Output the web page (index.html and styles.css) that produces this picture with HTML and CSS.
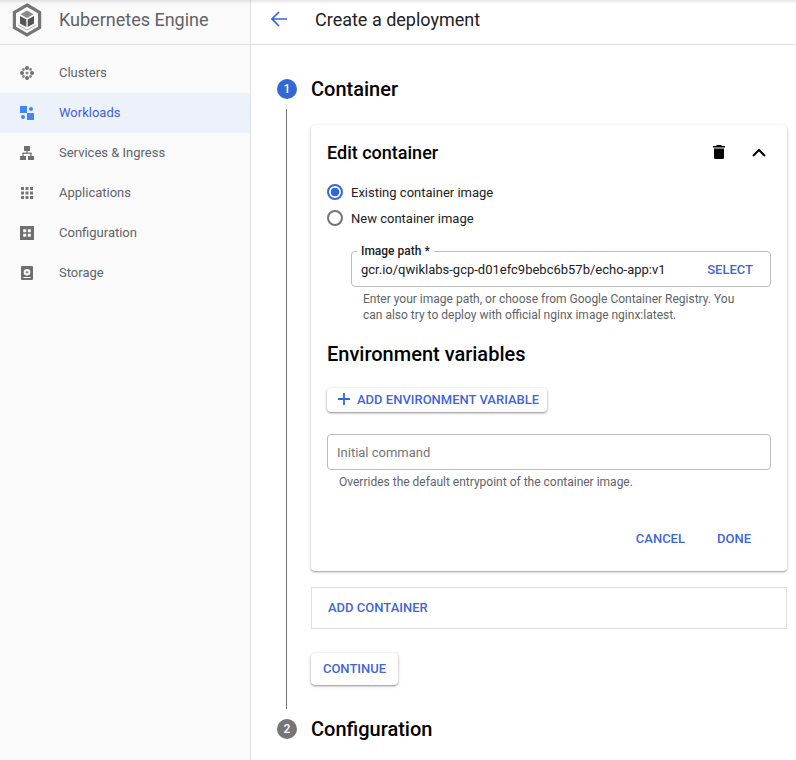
FILE: index.html
```html
<!DOCTYPE html>
<html lang="en">
<head>
	<meta charset="UTF-8">
	<title>Create a deployment</title>
	<link rel="stylesheet" href="styles.css">
</head>
<body>
	<div id="app">
		<div id="sidebar">
			<div class="side-head">
				<svg class="logo" width="30" height="34" viewBox="0 0 30 34">
					<path d="M15 2 27.600 9.300v15.400L15 32 2.400 24.700V9.300z" fill="none" stroke="#757575" stroke-width="3.200"/>
					<path d="M15 7.500 21.500 11.300 15 15 8.500 11.300z" fill="#8a8a8a"/>
					<path d="M8 13 14.300 16.600v7.400L8 20.400z" fill="#555"/>
					<path d="M22 13 15.700 16.600v7.400L22 20.400z" fill="#555"/>
					<path d="M6 22 15 27l9-5" fill="none" stroke="#b0b0b0" stroke-width="1"/>
				</svg>
				<span class="product">Kubernetes Engine</span>
			</div>
			<ul class="nav">
				<li>
					<svg class="ico" width="14" height="14" viewBox="0 0 14 14" fill="#6f6f6f">
						<circle cx="7" cy="2" r="2"/><circle cx="7" cy="12" r="2"/><circle cx="2" cy="7" r="2"/><circle cx="12" cy="7" r="2"/>
						<g fill="#858585"><circle cx="3.500" cy="3.500" r="1.400"/><circle cx="10.500" cy="3.500" r="1.400"/><circle cx="3.500" cy="10.500" r="1.400"/><circle cx="10.500" cy="10.500" r="1.400"/><circle cx="7" cy="7" r="1.500"/></g>
					</svg>
					Clusters
				</li>
				<li class="on">
					<svg class="ico" width="14" height="14" viewBox="0 0 14 14" fill="#4285f4">
						<rect x="0" y="0" width="7" height="7"/><rect x="7" y="7" width="7" height="7"/><circle cx="11" cy="3" r="2"/><circle cx="3" cy="11" r="2"/>
					</svg>
					Workloads
				</li>
				<li>
					<svg class="ico" width="14" height="14" viewBox="0 0 14 14" fill="#6f6f6f">
						<rect x="4" y="0" width="6" height="5"/><rect x="6.400" y="5" width="1.200" height="2"/><rect x="2.400" y="6.600" width="9.200" height="1.200"/><rect x="2.400" y="7" width="1.200" height="3"/><rect x="10.400" y="7" width="1.200" height="3"/><rect x="0" y="10" width="6" height="4"/><rect x="8" y="10" width="6" height="4"/>
					</svg>
					Services &amp; Ingress
				</li>
				<li>
					<svg class="ico" width="14" height="14" viewBox="0 0 14 14" fill="#757575">
						<path d="M1 1h3v3H1zM5.500 1h3v3h-3zM10 1h3v3h-3zM1 5.500h3v3H1zM5.500 5.500h3v3h-3zM10 5.500h3v3h-3zM1 10h3v3H1zM5.500 10h3v3h-3zM10 10h3v3h-3z"/>
					</svg>
					Applications
				</li>
				<li>
					<svg class="ico" width="14" height="14" viewBox="0 0 14 14">
						<rect width="14" height="14" fill="#6f6f6f"/>
						<path d="M3.200 3.200h3v3h-3zM7.800 3.200h3v3h-3zM3.200 7.800h3v3h-3zM7.800 7.800h3v3h-3z" fill="#fafafa"/>
					</svg>
					Configuration
				</li>
				<li>
					<svg class="ico" width="14" height="14" viewBox="0 0 14 14">
						<rect x="1" y="0" width="12" height="14" rx="1" fill="#6f6f6f"/>
						<circle cx="7" cy="6.300" r="3.300" fill="#fafafa"/>
						<circle cx="7" cy="6.300" r="1.200" fill="#8a8a8a"/>
						<rect x="3.500" y="11" width="7" height="1" fill="#fafafa"/>
					</svg>
					Storage
				</li>
			</ul>
		</div>
		<div id="main">
			<div class="top-bar">
				<svg class="back" width="16" height="16" viewBox="0 0 16 16">
					<path d="M16 8H1.500M8 1 1 8l7 7" fill="none" stroke="#3367d6" stroke-width="1.700"/>
				</svg>
				<span class="page-title">Create a deployment</span>
			</div>
			<div class="stepper">
				<div class="step-head">
					<span class="step-num active">1</span>
					<span class="step-title">Container</span>
				</div>
				<div class="step-body">
					<div class="card">
						<div class="card-head">
							<h2>Edit container</h2>
							<svg class="trash" width="12" height="14" viewBox="0 0 12 14" fill="#000">
								<path d="M4 0h4l1 1h3v1.500H0V1h3zM1 3.500h10V12.500A1.500 1.500 0 0 1 9.500 14h-7A1.500 1.500 0 0 1 1 12.500z"/>
							</svg>
							<svg class="chevron" width="14" height="9" viewBox="0 0 14 9">
								<path d="M1 8l6-6 6 6" fill="none" stroke="#000" stroke-width="2"/>
							</svg>
						</div>
						<div class="radios">
							<label class="radio"><span class="dot checked"></span>Existing container image</label>
							<label class="radio"><span class="dot"></span>New container image</label>
						</div>
						<div class="image-block">
							<div class="field path-field">
								<span class="legend">Image path *</span>
								<span class="value">gcr.io/qwiklabs-gcp-d01efc9bebc6b57b/echo-app:v1</span>
								<span class="link">SELECT</span>
							</div>
							<p class="help path-help">Enter your image path, or choose from Google Container Registry. You can also try to deploy with official nginx image nginx:latest.</p>
						</div>
						<h2 class="env-title">Environment variables</h2>
						<div class="raised add-env">
							<svg width="12" height="12" viewBox="0 0 12 12">
								<path d="M6 0v12M0 6h12" stroke="#3367d6" stroke-width="1.800"/>
							</svg>
							<span class="link">ADD ENVIRONMENT VARIABLE</span>
						</div>
						<div class="field command">Initial command</div>
						<p class="help command-help">Overrides the default entrypoint of the container image.</p>
						<div class="card-actions">
							<span class="link">CANCEL</span>
							<span class="link">DONE</span>
						</div>
					</div>
					<div class="add-row"><span class="link">ADD CONTAINER</span></div>
					<div class="raised continue"><span class="link">CONTINUE</span></div>
				</div>
				<div class="step-head">
					<span class="step-num">2</span>
					<span class="step-title">Configuration</span>
				</div>
			</div>
		</div>
	</div>
</body>
</html>
```

FILE: styles.css
```css
* {
	margin: 0;
	padding: 0;
	box-sizing: border-box;
	list-style: none;
}
html, body {
	height: 760px;
	overflow: hidden;
}
body {
	font-family: Roboto, "Liberation Sans", sans-serif;
	font-size: 13px;
	color: #202124;
	background: #fff;
}
#app {
	position: relative;
	display: flex;
	height: 760px;
}
/* faint shadow from the bar above the page */
#app::after {
	content: "";
	position: absolute;
	top: 0;
	left: 0;
	right: 0;
	height: 4px;
	background: linear-gradient(rgba(0,0,0,.1), rgba(0,0,0,0));
}

/* sidebar */
#sidebar {
	width: 251px;
	flex: none;
	background: #fafafa;
	border-right: 1px solid #e0e0e0;
}
.side-head {
	display: flex;
	align-items: center;
	height: 45px;
	padding: 0 0 4px 12px;
	border-bottom: 1px solid #e0e0e0;
}
.logo {
	flex: none;
	margin-right: 17px;
}
.product {
	padding-bottom: 2px;
	font-size: 18px;
	color: #5f6368;
}
.nav {
	padding-top: 8px;
}
.nav li {
	display: flex;
	align-items: center;
	height: 40px;
	padding: 0 0 2px 20px;
	color: #5f6368;
}
.nav .ico {
	margin: 2px 25px 0 0;
	flex: none;
}
.nav .on {
	background: #edf1fa;
	color: #3f62d6;
}

/* header */
#main {
	flex: 1;
	min-width: 0;
}
.top-bar {
	display: flex;
	align-items: center;
	height: 45px;
	padding: 0 0 6px 20px;
	border-bottom: 1px solid #e0e0e0;
}
.back {
	flex: none;
	margin-right: 28px;
}
.page-title {
	font-size: 18px;
	color: #202124;
}

/* stepper */
.stepper {
	padding: 34px 9px 0 26px;
}
.step-head {
	display: flex;
	align-items: center;
	height: 20px;
}
.step-num {
	width: 20px;
	height: 20px;
	margin-right: 14px;
	border-radius: 50%;
	background: #757575;
	color: #fff;
	font-size: 12px;
	font-weight: 500;
	line-height: 20px;
	text-align: center;
}
.step-num.active {
	background: #3367d6;
}
.step-title {
	font-size: 20px;
	font-weight: 500;
	color: #000;
}
.step-body {
	height: 600px;
	margin: 10px 0 10px 9px;
	padding: 16px 0 0 24px;
	border-left: 1px solid #757575;
}

/* card */
.card {
	height: 446px;
	padding: 0 16px;
	border-radius: 4px;
	background: #fff;
	box-shadow: 0 1px 3px rgba(0,0,0,.3), 0 1px 1px rgba(0,0,0,.14);
}
.card-head {
	display: flex;
	align-items: center;
	height: 54px;
}
h2 {
	font-size: 18px;
	font-weight: 500;
	color: #000;
}
.card-head h2 {
	flex: 1;
}
.trash {
	margin-right: 27px;
}
.chevron {
	margin-right: 5px;
}
.radio {
	display: flex;
	align-items: center;
	height: 26px;
	color: #202124;
}
.dot {
	width: 16px;
	height: 16px;
	margin-right: 8px;
	border: 2px solid #757575;
	border-radius: 50%;
}
.dot.checked {
	border-color: #3367d6;
	background: radial-gradient(circle, #3367d6 0 4px, #fff 4.600px);
}
.image-block {
	padding: 20px 0 0 24px;
}
.field {
	border: 1px solid #bdbdbd;
	border-radius: 4px;
	background: #fff;
}
.path-field {
	position: relative;
	display: flex;
	align-items: center;
	justify-content: space-between;
	height: 36px;
	padding: 0 17px 0 9px;
}
.legend {
	position: absolute;
	left: 5px;
	top: -8px;
	padding: 0 4px;
	background: #fff;
	font-size: 12px;
	font-weight: 500;
	line-height: 14px;
	color: #202124;
}
.value {
	color: #202124;
}
.link {
	font-weight: 500;
	color: #3f67d6;
}
.help {
	font-size: 12px;
	line-height: 16px;
	color: #5f6368;
}
.path-help {
	width: 396px;
	padding: 4px 0 0 12px;
}
.env-title {
	margin-top: 19px;
	font-size: 20px;
	line-height: 24px;
}
.raised {
	border-radius: 4px;
	background: #fff;
	box-shadow: 0 1px 3px rgba(0,0,0,.35), 0 1px 1px rgba(0,0,0,.14);
}
.add-env {
	display: flex;
	align-items: center;
	gap: 7px;
	width: 220px;
	height: 24px;
	margin-top: 22px;
	padding: 0 0 2px 11px;
}
.command {
	height: 36px;
	margin-top: 22px;
	padding-left: 9px;
	line-height: 36px;
	color: #757575;
}
.command-help {
	padding: 4px 0 0 12px;
}
.card-actions {
	display: flex;
	justify-content: flex-end;
	gap: 32px;
	padding: 41px 20px 0 0;
}

/* below the card */
.add-row {
	display: flex;
	align-items: center;
	height: 42px;
	margin-top: 16px;
	padding: 0 0 2px 16px;
	border: 1px solid #e0e0e0;
}
.continue {
	display: flex;
	align-items: center;
	justify-content: center;
	width: 87px;
	height: 32px;
	margin-top: 24px;
	padding-bottom: 2px;
}
```
